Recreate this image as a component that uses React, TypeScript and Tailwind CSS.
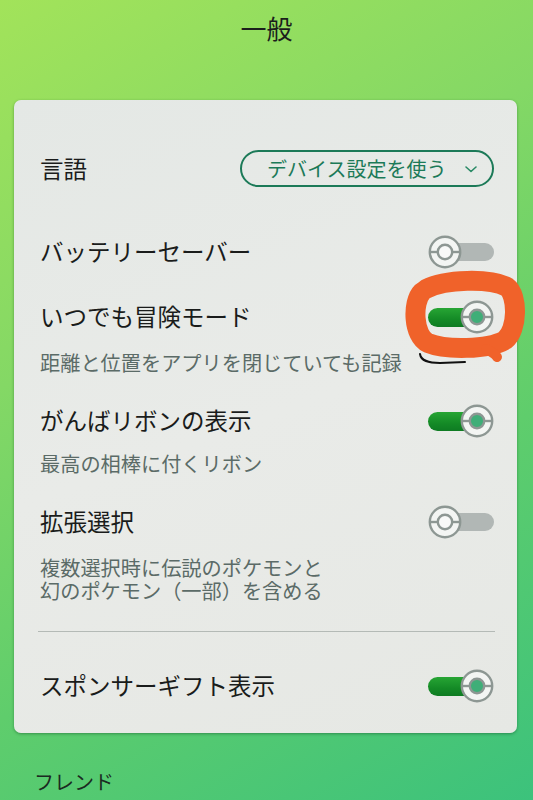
import React from "react";

const FONT = { fontFamily: '"Noto Sans CJK JP", "Noto Sans", sans-serif' };

function Knob({ on }: { on: boolean }) {
  return (
    <svg width="34" height="34" viewBox="0 0 34 34" className="relative z-10 shrink-0">
      <circle cx="17" cy="17" r="15.2" fill="#f3f5f3" stroke="#8d9793" strokeWidth="2.4" />
      <line x1="2" y1="17" x2="9.5" y2="17" stroke="#8d9793" strokeWidth="2.4" />
      <line x1="24.5" y1="17" x2="32" y2="17" stroke="#8d9793" strokeWidth="2.4" />
      <circle cx="17" cy="17" r="7.2" fill={on ? "#3fae78" : "#f8f9f8"} stroke="#8d9793" strokeWidth="2.4" />
    </svg>
  );
}

function Toggle({ on }: { on: boolean }) {
  return (
    <div className="relative flex h-[34px] w-[66px] items-center">
      {on ? (
        <>
          <div className="absolute left-0 top-[7.5px] h-[19px] w-[40px] rounded-l-full bg-[linear-gradient(180deg,#27a534_0%,#148a26_60%,#0e7b22_100%)]" />
          <div className="ml-auto">
            <Knob on />
          </div>
        </>
      ) : (
        <>
          <div className="absolute right-0 top-[8px] h-[18px] w-[50px] rounded-r-full bg-[#b1b7b5]" />
          <Knob on={false} />
        </>
      )}
    </div>
  );
}

function Row({ label, on }: { label: string; on: boolean }) {
  return (
    <div className="flex h-[34px] items-center justify-between">
      <span className="text-[23.5px] font-normal leading-none text-[#1a1c1b]">{label}</span>
      <Toggle on={on} />
    </div>
  );
}

function Sub({ children, className = "" }: { children: React.ReactNode; className?: string }) {
  return <div className={`text-[20.2px] leading-[23px] text-[#5b6b67] ${className}`}>{children}</div>;
}

export default function App() {
  return (
    <div
      style={FONT}
      className="relative h-[800px] w-[533px] overflow-hidden bg-[linear-gradient(150deg,#a2e35a_0%,#84d865_35%,#5fcd6c_65%,#3cc27c_100%)]"
    >
      <div className="flex h-[54px] items-center justify-center text-[26px] font-normal text-[#1b1e1c]">一般</div>

      <div className="mx-[14px] mt-[46px] w-[503px] rounded-[7px] bg-[linear-gradient(160deg,#e4e8e5_0%,#e9ebe8_50%,#e6e8e4_100%)] pb-[30px] pl-[26px] pr-[23px] pt-[50px] shadow-[0_1px_3px_rgba(10,70,30,0.45)]">
        <div className="flex h-[37px] items-center justify-between">
          <span className="text-[23.5px] font-normal leading-none text-[#1a1c1b]">言語</span>
          <div className="flex h-[37px] w-[254px] items-center rounded-full border-[2.5px] border-[#1c7a58] pl-[25px] pr-[12px] text-[#1c7a58]">
            <span className="text-[20px] font-normal leading-none">デバイス設定を使う</span>
            <svg width="14" height="10" viewBox="0 0 14 10" className="ml-auto mr-[2px]">
              <path d="M2 3 L7 7.5 L12 3" fill="none" stroke="#2a8a66" strokeWidth="1.6" strokeLinecap="round" strokeLinejoin="round" />
            </svg>
          </div>
        </div>

        <div className="mt-[48px]">
          <Row label="バッテリーセーバー" on={false} />
        </div>

        <div className="mt-[31px]">
          <Row label="いつでも冒険モード" on />
          <Sub className="mt-[17px]">距離と位置をアプリを閉じていても記録</Sub>
        </div>

        <div className="mt-[30px]">
          <Row label="がんばリボンの表示" on />
          <Sub className="mt-[14px]">最高の相棒に付くリボン</Sub>
        </div>

        <div className="mt-[30px]">
          <Row label="拡張選択" on={false} />
          <Sub className="mt-[17px]">
            <div>複数選択時に伝説のポケモンと</div>
            <div>幻のポケモン（一部）を含める</div>
          </Sub>
        </div>

        <div className="-mr-[1px] ml-[-2px] mt-[29px] h-px bg-[#b4bab6]" />

        <div className="mt-[37px]">
          <Row label="スポンサーギフト表示" on />
        </div>
      </div>

      <div className="ml-[34px] mt-[37px] text-[20px] font-normal leading-[24px] text-[#1b2a22]">フレンド</div>

      <svg className="pointer-events-none absolute left-0 top-0" width="533" height="800" viewBox="0 0 533 800">
        <path
          d="M420 354 C421 361, 428 363, 440 363 L465 362"
          fill="none"
          stroke="#111"
          strokeWidth="2"
          strokeLinecap="round"
        />
        <path
          d="M426 289 C445 279, 490 278, 507 287 C518 295, 518 330, 505 340 C488 350, 445 350, 428 343 C413 336, 412 302, 422 292"
          fill="none"
          stroke="#f0622a"
          strokeWidth="20"
          strokeLinecap="round"
          strokeLinejoin="round"
        />
        <path d="M486 349 C492 352, 496 355, 497 357" fill="none" stroke="#f0622a" strokeWidth="10" strokeLinecap="round" />
      </svg>
    </div>
  );
}
